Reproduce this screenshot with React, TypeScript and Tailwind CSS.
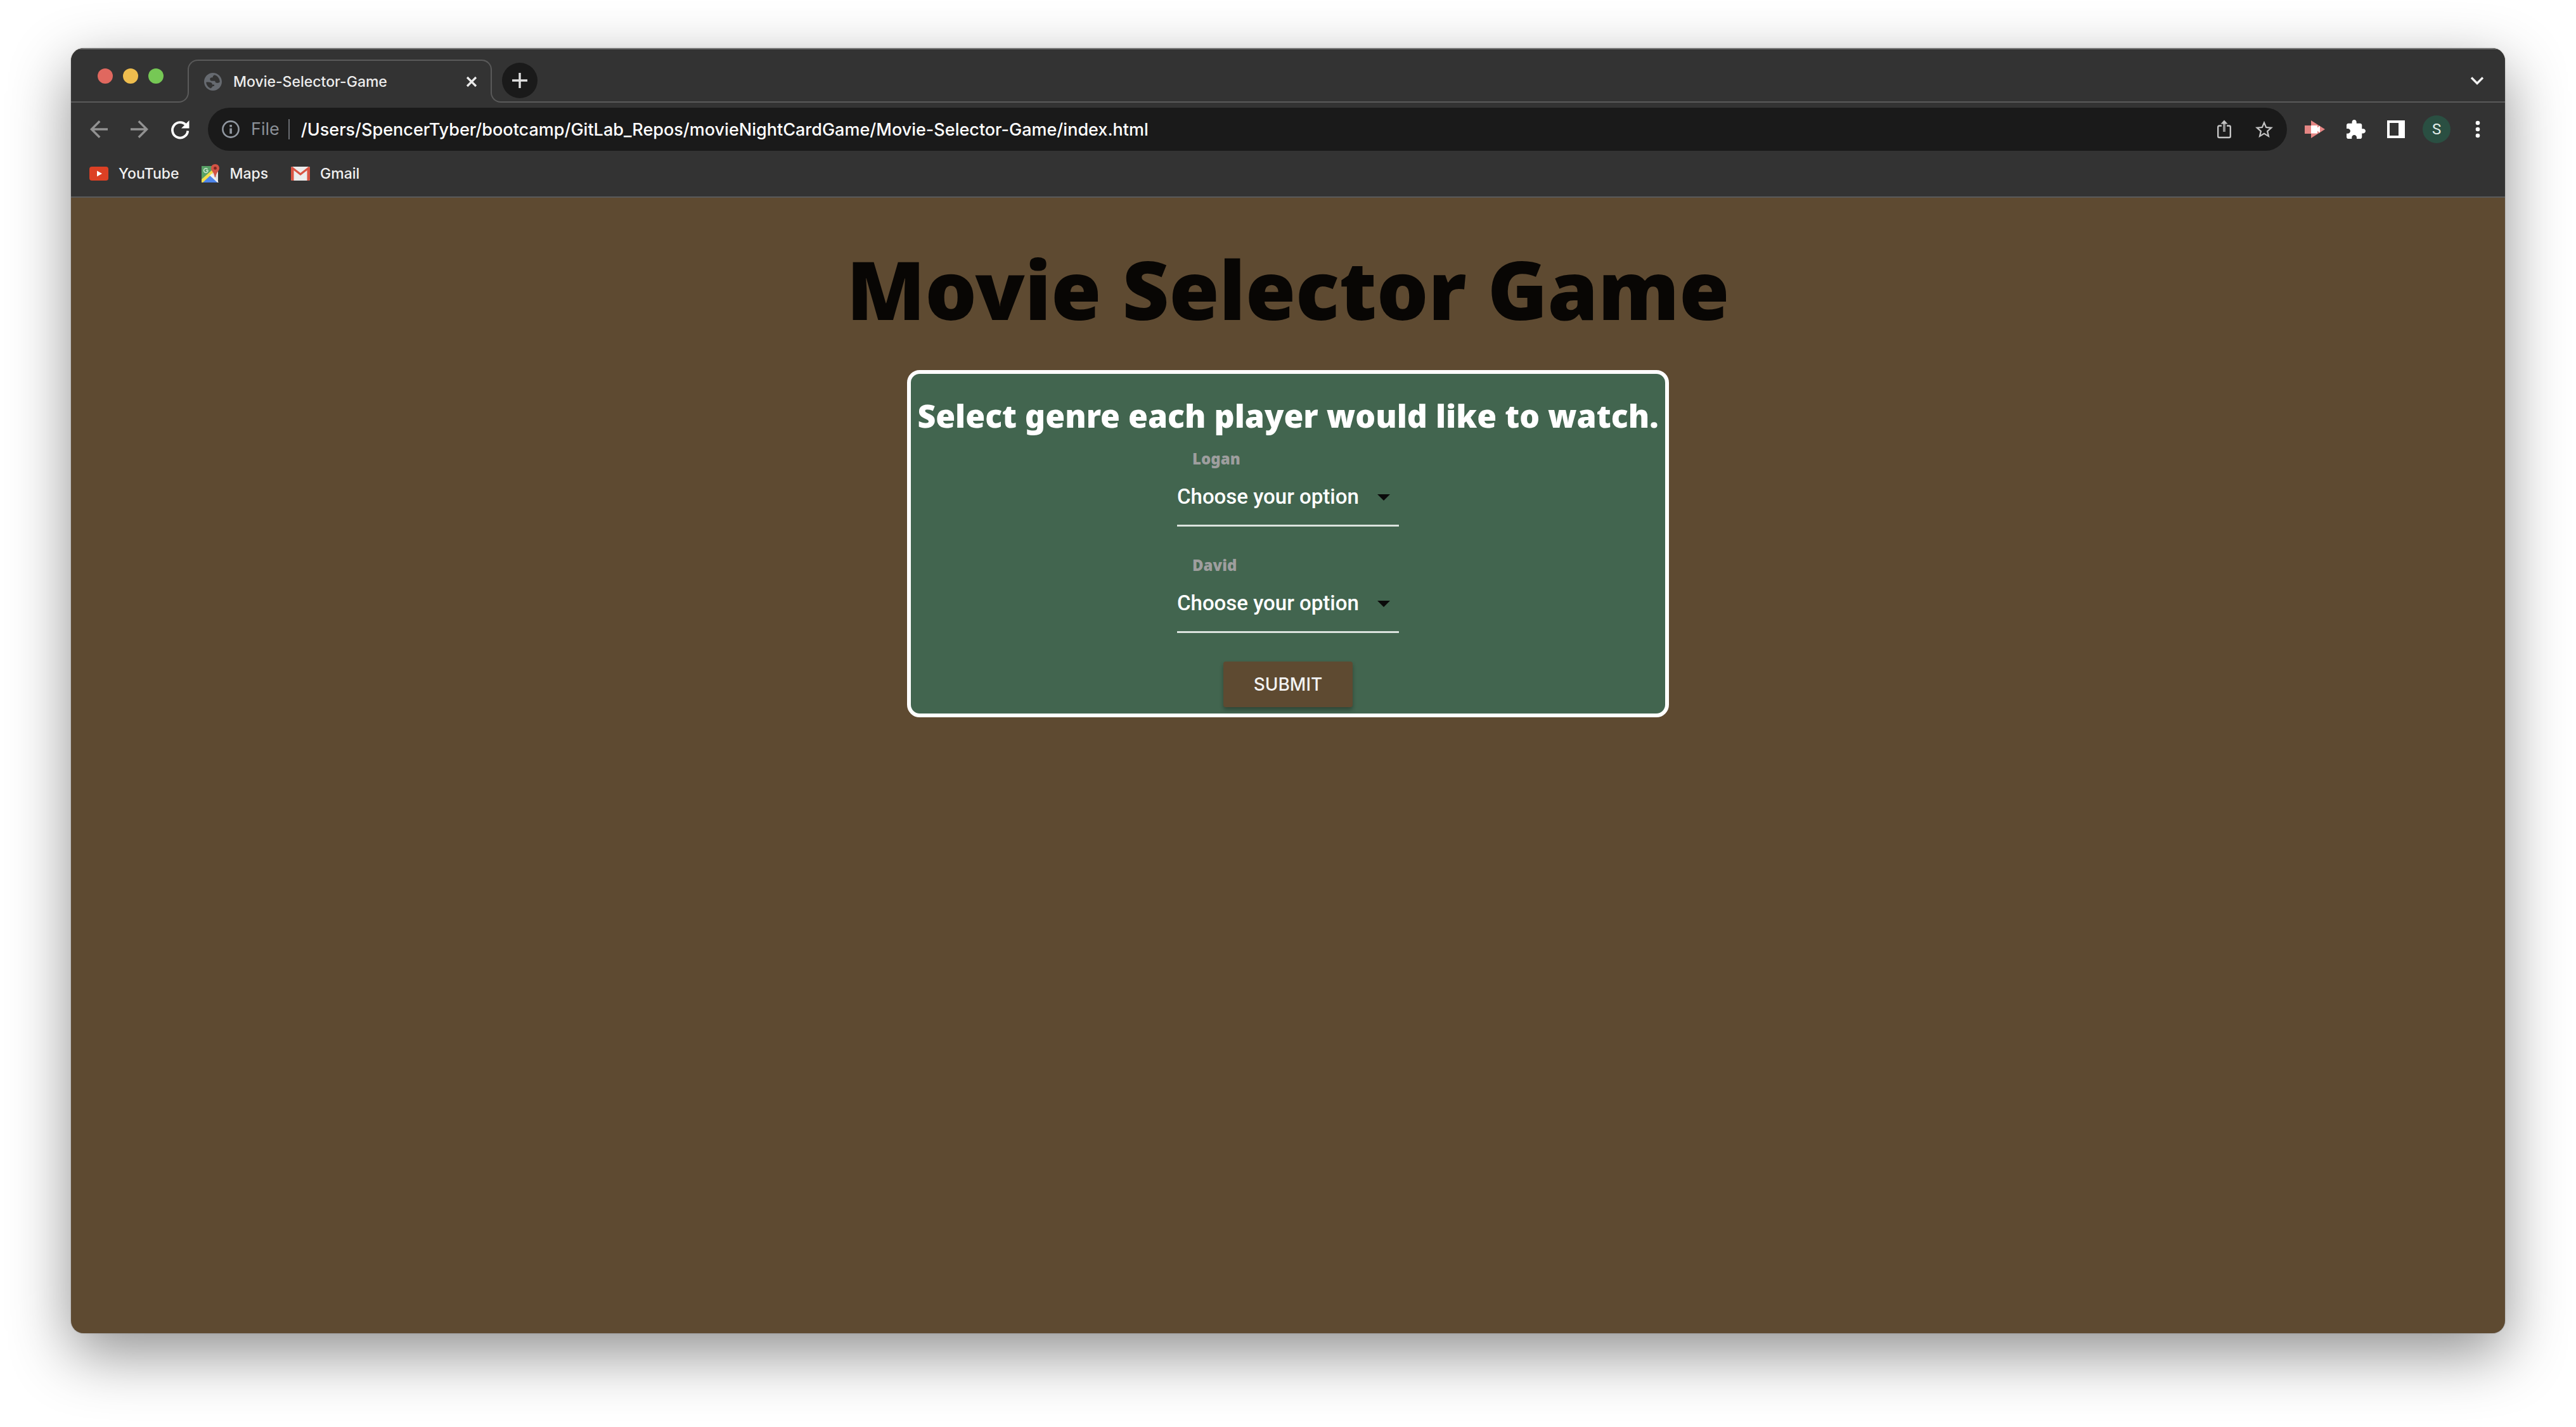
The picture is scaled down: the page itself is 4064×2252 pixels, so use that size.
import type { ReactNode } from "react";

function IconButton({ label, className, children }: { label: string; className: string; children: ReactNode }) {
  return (
    <button type="button" aria-label={label} className={`flex shrink-0 items-center justify-center ${className}`}>
      {children}
    </button>
  );
}

function GlobeIcon() {
  return (
    <svg viewBox="2 2 20 20" className="size-7 shrink-0 fill-[#666a70]" aria-hidden="true">
      <path d="M12 2C6.48 2 2 6.48 2 12s4.48 10 10 10 10-4.48 10-10S17.52 2 12 2zM4.300 12.600c1.900-.300 3.500-.200 4.800.200 1.500.400 2.100 1.200 2.100 2.400h2.200v1.800h-1.800c-.300 1-1 1.600-2.100 2.500C6.700 18.600 4.500 15.900 4.300 12.600zM19.700 12.400c-.900.900-2.200 1.200-3.600.900-1.200-.300-1.700-1.100-1.800-2.200h-3.700c-1.200 0-2-.800-2-1.900 0-1.300.900-2 2.200-2h.900c0-1.400.700-2.200 2.100-2.800 3.500 1 5.900 4.200 5.900 8z" />
    </svg>
  );
}

function TabStrip() {
  return (
    <header className="flex border-t-2 border-[#6b6b6b] pt-4">
      <div className="flex h-[68px] w-[170px] items-center gap-4 border-b-2 border-[#5a5a5a] pb-3.5 pl-[42px]">
        <button type="button" aria-label="Close window" className="size-6 rounded-full bg-[#e0685f]" />
        <button type="button" aria-label="Minimize window" className="size-6 rounded-full bg-[#eebd4e]" />
        <button type="button" aria-label="Zoom window" className="size-6 rounded-full bg-[#76c855]" />
      </div>
      <div className="flex w-8 flex-col">
        <div className="ml-3.5 h-[34px] rounded-tl-2xl border-t-2 border-l-2 border-[#5a5a5a]" />
        <div className="h-[34px] w-4 rounded-br-2xl border-r-2 border-b-2 border-[#5a5a5a]" />
      </div>
      <div className="flex h-[68px] w-[444px] items-center gap-[18px] border-t-2 border-[#5a5a5a] pr-1 pl-2">
        <GlobeIcon />
        <span className="flex-1 text-[23px] leading-8 font-medium text-[#ececec]">Movie-Selector-Game</span>
        <IconButton label="Close tab" className="size-5">
          <svg viewBox="0 0 20 20" className="size-5 stroke-[#ececec]" fill="none" strokeWidth="3.2">
            <path d="M3 3l14 14M17 3l-14 14" />
          </svg>
        </IconButton>
      </div>
      <div className="flex w-8 flex-col items-end">
        <div className="mr-3.5 h-[34px] w-[18px] rounded-tr-2xl border-t-2 border-r-2 border-[#5a5a5a]" />
        <div className="h-[34px] w-4 rounded-bl-2xl border-b-2 border-l-2 border-[#5a5a5a]" />
      </div>
      <div className="flex h-[68px] flex-1 items-center justify-between border-b-2 border-[#5a5a5a] pr-8 pl-0.5">
        <IconButton label="New tab" className="size-14 rounded-full bg-[#1a1a1a]">
          <svg viewBox="0 0 24 24" className="size-6 stroke-[#e0e0e0]" fill="none" strokeWidth="3.400">
            <path d="M12 0v24M0 12h24" />
          </svg>
        </IconButton>
        <IconButton label="Search tabs" className="size-6">
          <svg viewBox="0 0 24 24" className="size-6 stroke-[#f2f2f2]" fill="none" strokeWidth="3.400">
            <path d="M3 7.500l9 9 9-9" />
          </svg>
        </IconButton>
      </div>
    </header>
  );
}

function Toolbar() {
  return (
    <div className="flex items-center pt-2 pr-10 pl-[30px]">
      <nav className="flex gap-9 pr-[30px]">
        <IconButton label="Back" className="size-7">
          <svg viewBox="4 4 16 16" className="size-7 fill-[#929292]">
            <path d="M20 11H7.830l5.590-5.590L12 4l-8 8 8 8 1.410-1.410L7.830 13H20v-2z" />
          </svg>
        </IconButton>
        <IconButton label="Forward" className="size-7">
          <svg viewBox="4 4 16 16" className="size-7 fill-[#929292]">
            <path d="M12 4l-1.410 1.410L16.170 11H4v2h12.170l-5.580 5.590L12 20l8-8z" />
          </svg>
        </IconButton>
        <IconButton label="Reload" className="size-7">
          <svg viewBox="0 0 28 28" className="size-7 overflow-visible">
            <path d="M23.500 7.500A12.200 12.200 0 1 0 26.300 16.500" fill="none" stroke="#fff" strokeWidth="3.800" />
            <path d="M28.500 0v12.500H16z" fill="#fff" />
          </svg>
        </IconButton>
      </nav>
      <div className="flex h-[68px] flex-1 items-center rounded-full bg-[#1a1a1a] px-[22px] text-[27px]">
        <svg viewBox="0 0 28 28" className="size-7 shrink-0" aria-hidden="true">
          <circle cx="14" cy="14" r="12.600" fill="none" stroke="#9097a0" strokeWidth="2.600" />
          <path d="M12.300 12.500h3.600V21h-3.600zM12.300 7h3.600v3.400h-3.600z" fill="#9097a0" />
        </svg>
        <span className="ml-[18px] text-[#8b9097]">File</span>
        <span className="mx-3.5 h-8 w-0.5 bg-[#6a6d72]" />
        <input
          type="text"
          aria-label="Address"
          defaultValue="/Users/SpencerTyber/bootcamp/GitLab_Repos/movieNightCardGame/Movie-Selector-Game/index.html"
          className="ml-1 h-12 min-w-0 flex-1 bg-transparent font-medium text-white outline-none"
        />
        <IconButton label="Share" className="h-[30px] w-[22px]">
          <svg viewBox="0 0 22 30" className="h-[30px] w-[22px]" fill="none" stroke="#c4c4c4" strokeWidth="2.400">
            <path d="M7 9.500H3.200q-2 0-2 2V26q0 2 2 2h15.600q2 0 2-2V11.500q0-2-2-2H15" />
            <path d="M11 5v14" stroke="#8e8e8e" strokeWidth="4" />
            <path d="M5.500 6.500L11 .500l5.500 6z" fill="#c4c4c4" stroke="none" />
          </svg>
        </IconButton>
        <IconButton label="Bookmark this page" className="ml-[38px] size-7">
          <svg viewBox="2 2 20 19" className="size-7 fill-[#c4c4c4]">
            <path d="M22 9.240l-7.190-.620L12 2 9.190 8.630 2 9.240l5.460 4.730L5.820 21 12 17.270 18.180 21l-1.630-7.030L22 9.240zM12 15.400l-3.760 2.270 1-4.280-3.320-2.880 4.380-.380L12 6.100l1.710 4.040 4.380.380-3.320 2.880 1 4.280L12 15.400z" />
          </svg>
        </IconButton>
      </div>
      <div className="flex items-center pl-7">
        <IconButton label="Screen recorder" className="h-7 w-8">
          <svg viewBox="0 0 32 28" className="h-7 w-8">
            <path d="M0 8h10V0l22 14-22 14v-7H0z" fill="#e58684" />
            <path d="M10 8h10v3.500l4-3v11l-4-3V20.500H10z" fill="#fff" />
          </svg>
        </IconButton>
        <IconButton label="Extensions" className="ml-[34px] size-[30px]">
          <svg viewBox="2 1 21 21" className="size-[30px] fill-white">
            <path d="M20.500 11H19V7c0-1.100-.900-2-2-2h-4V3.500C13 2.120 11.880 1 10.500 1S8 2.120 8 3.500V5H4c-1.100 0-1.990.900-1.990 2v3.800H3.500c1.490 0 2.700 1.210 2.700 2.700s-1.210 2.700-2.700 2.700H2V20c0 1.100.900 2 2 2h3.800v-1.500c0-1.490 1.210-2.700 2.700-2.700 1.490 0 2.700 1.210 2.700 2.700V22H17c1.100 0 2-.900 2-2v-4h1.500c1.380 0 2.500-1.120 2.500-2.500S21.880 11 20.500 11z" />
          </svg>
        </IconButton>
        <IconButton label="Side panel" className="ml-[34px] size-7">
          <svg viewBox="0 0 28 28" className="size-7">
            <path fillRule="evenodd" d="M0 0h28v28H0zM4 4v20h14V4z" fill="#fff" />
          </svg>
        </IconButton>
        <IconButton label="Profile" className="ml-7 size-11 rounded-full bg-[#2a4f42] font-['Roboto',sans-serif] text-2xl text-[#e4eeea]">
          S
        </IconButton>
        <IconButton label="Menu" className="ml-10 h-7 w-1.5">
          <svg viewBox="0 0 6 28" className="h-7 w-1.5 overflow-visible fill-white">
            <circle cx="3" cy="4" r="3.300" />
            <circle cx="3" cy="14" r="3.300" />
            <circle cx="3" cy="24" r="3.300" />
          </svg>
        </IconButton>
      </div>
    </div>
  );
}

function YouTubeIcon() {
  return (
    <svg viewBox="0 0 30 22" className="h-[22px] w-[30px]" aria-hidden="true">
      <rect width="30" height="22" rx="4" fill="#dc4024" />
      <path d="M12 6.500l8 4.500-8 4.500z" fill="#fff" />
    </svg>
  );
}

function MapsIcon() {
  return (
    <svg viewBox="0 0 28 30" className="h-[30px] w-7" aria-hidden="true">
      <path d="M0 3h26v26H0z" fill="#57a065" />
      <path d="M14 15L26 3v26z" fill="#e3e3e3" />
      <path d="M1 29l13-12 12 12z" fill="#4d85ea" />
      <path d="M0 29v-5L18 8v6L2 29z" fill="#f3dd4b" />
      <path d="M13 18l3-3 11 14h-2z" fill="#f1f1f1" />
      <path d="M9.500 8.200a3.300 3.300 0 1 0 .600 2H7" fill="none" stroke="#cfe6d2" strokeWidth="1.500" />
      <path d="M21.500 0C17.800 0 15 2.800 15 6.400c0 4.600 5.300 6.600 5.700 14.100h1.600C22.700 13 28 11 28 6.400 28 2.800 25.200 0 21.500 0z" fill="#d35445" />
      <circle cx="21.500" cy="6.400" r="2.400" fill="#7c2620" />
    </svg>
  );
}

function GmailIcon() {
  return (
    <svg viewBox="0 0 30 22" className="h-[22px] w-[30px]" aria-hidden="true">
      <rect width="30" height="22" rx="2" fill="#ececec" />
      <path d="M0 2q0-2 2-2l2.500 2.500V22H2q-2 0-2-2zM30 2q0-2-2-2l-2.500 2.500V22H28q2 0 2-2z" fill="#d95443" />
      <path d="M1.500 1.500L15 12 28.500 1.500" fill="none" stroke="#d95443" strokeWidth="3.200" />
    </svg>
  );
}

function Bookmarks() {
  return (
    <nav className="flex h-[74px] items-center gap-9 border-b-2 border-[#5a5a5a] pl-[29px] text-[23px] font-medium text-[#f0f0f0]">
      <a href="#youtube" className="flex items-center gap-4">
        <YouTubeIcon />
        YouTube
      </a>
      <a href="#maps" className="flex items-center gap-4">
        <MapsIcon />
        Maps
      </a>
      <a href="#gmail" className="flex items-center gap-4">
        <GmailIcon />
        Gmail
      </a>
    </nav>
  );
}

function GenreField({ player }: { player: string }) {
  const id = `genre-${player.toLowerCase()}`;
  return (
    <div className="w-[350px]">
      <label htmlFor={id} className="block pl-6 font-['Noto_Sans',sans-serif] text-[24px] leading-8 font-black text-[#9e9e9e]">
        {player}
      </label>
      <div className="relative">
        <select
          id={id}
          defaultValue=""
          className="block h-[91px] w-full appearance-none border-b-[3px] border-[#dbe3de] bg-transparent font-['Roboto',sans-serif] text-[33px] font-medium text-white outline-none"
        >
          <option value="" disabled>
            Choose your option
          </option>
          <option value="action">Action</option>
          <option value="comedy">Comedy</option>
          <option value="drama">Drama</option>
        </select>
        <svg viewBox="0 0 20 10" className="pointer-events-none absolute top-10 right-3.5 h-2.5 w-5" aria-hidden="true">
          <path d="M0 0h20L10 10z" fill="#0a0a0a" />
        </svg>
      </div>
    </div>
  );
}

export default function App() {
  return (
    <div className="flex min-h-screen flex-col bg-white px-28 pt-19 pb-37 font-['Inter',sans-serif]">
      <div className="flex flex-1 flex-col overflow-hidden rounded-[20px] bg-[#5e4a31] shadow-[0_32px_96px_rgba(0,0,0,0.44),0_0_2px_rgba(0,0,0,0.35)]">
        <div className="bg-[#333333]">
          <TabStrip />
          <Toolbar />
          <Bookmarks />
        </div>
        <main className="flex flex-1 flex-col items-center pt-20">
          <h1 className="font-['Noto_Sans',sans-serif] text-[128px] leading-none font-black text-[#080604]">
            Movie Selector Game
          </h1>
          <form
            onSubmit={(event) => event.preventDefault()}
            className="mt-16 flex flex-col items-center rounded-[20px] border-6 border-white bg-[#42654f] px-2.5 pt-9 pb-2.5"
          >
            <h2 className="font-['Noto_Sans',sans-serif] text-[50px] leading-[60px] font-black text-white">
              Select genre each player would like to watch.
            </h2>
            <div className="mt-[22px] flex flex-col gap-[45px]">
              <GenreField player="Logan" />
              <GenreField player="David" />
            </div>
            <button
              type="submit"
              className="mt-[45px] h-[72px] rounded bg-[#5e4a31] px-12 text-[28px] font-medium text-[#f2f2f2] shadow-[0_4px_6px_rgba(0,0,0,0.3)]"
            >
              SUBMIT
            </button>
          </form>
        </main>
      </div>
    </div>
  );
}
